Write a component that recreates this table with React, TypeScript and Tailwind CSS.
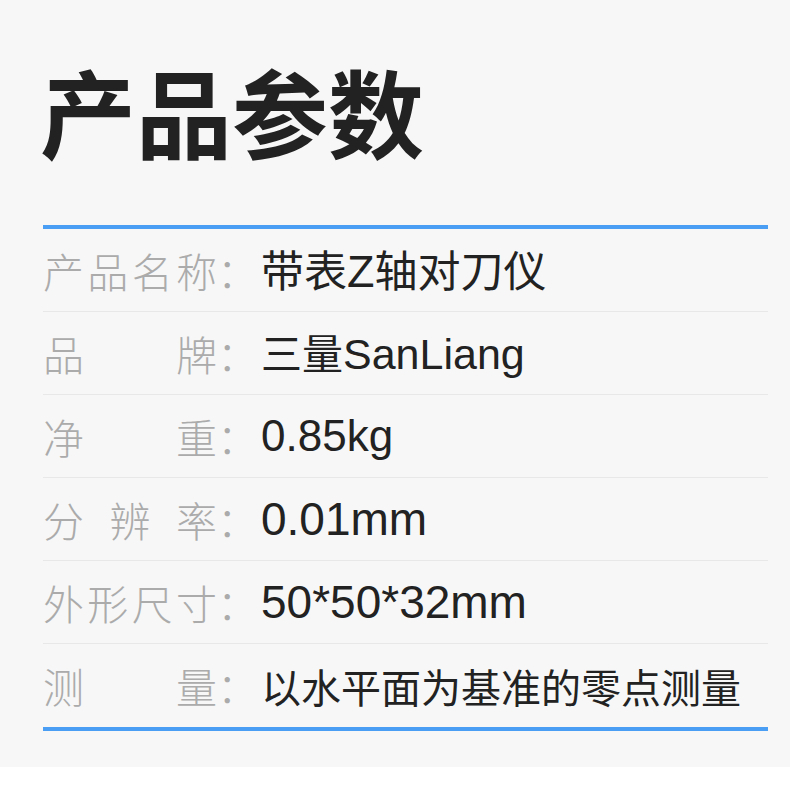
type Part = { t: string; latin?: boolean };

const rows: { label: string[]; value: Part[]; cjk: string; latin: string }[] = [
  { label: ["产", "品", "名", "称"], value: [{ t: "带表" }, { t: "Z", latin: true }, { t: "轴对刀仪" }], cjk: "text-[43px]", latin: "text-[45px]" },
  { label: ["品", "牌"], value: [{ t: "三量" }, { t: "SanLiang", latin: true }], cjk: "text-[41px]", latin: "text-[43px]" },
  { label: ["净", "重"], value: [{ t: "0.85kg", latin: true }], cjk: "text-[40px]", latin: "text-[44px]" },
  { label: ["分", "辨", "率"], value: [{ t: "0.01mm", latin: true }], cjk: "text-[40px]", latin: "text-[46px]" },
  { label: ["外", "形", "尺", "寸"], value: [{ t: "50*50*32mm", latin: true }], cjk: "text-[40px]", latin: "text-[46px]" },
  { label: ["测", "量"], value: [{ t: "以水平面为基准的零点测量" }], cjk: "text-[40px]", latin: "text-[45px]" },
];

export default function App() {
  return (
    <div className="w-[790px] h-[803px] bg-white font-['Liberation_Sans','Noto_Sans_CJK_SC',sans-serif]">
      <div className="h-[767px] bg-[#f7f7f7] pl-[43px] pt-[62px]">
        <h1 className="text-[96px] leading-[96px] font-bold text-[#222222] font-['Noto_Sans_CJK_SC',sans-serif] -ml-[3px]">
          产品参数
        </h1>

        <div className="mt-[67px] w-[725px]">
          <div className="h-[4px] bg-[#4a9ef3]" />

          {rows.map((row, i) => (
            <div
              key={i}
              className={
                "h-[83px] flex items-center " +
                (i < rows.length - 1 ? "border-b border-[#e8e8e8]" : "")
              }
            >
              <div className="w-[218px] flex items-center text-[41px] leading-none text-[#ababab] font-['Noto_Sans_CJK_SC',sans-serif] font-light">
                <div className="w-[174px] flex justify-between">
                  {row.label.map((c, j) => (
                    <span key={j}>{c}</span>
                  ))}
                </div>
                <span>：</span>
              </div>
              <div className="flex items-baseline leading-none text-[#222222]">
                {row.value.map((p, j) =>
                  p.latin ? (
                    <span key={j} className={row.latin}>
                      {p.t}
                    </span>
                  ) : (
                    <span key={j} className={row.cjk + " font-['Noto_Sans_CJK_SC',sans-serif]"}>
                      {p.t}
                    </span>
                  )
                )}
              </div>
            </div>
          ))}

          <div className="h-[4px] bg-[#4a9ef3]" />
        </div>
      </div>
    </div>
  );
}
